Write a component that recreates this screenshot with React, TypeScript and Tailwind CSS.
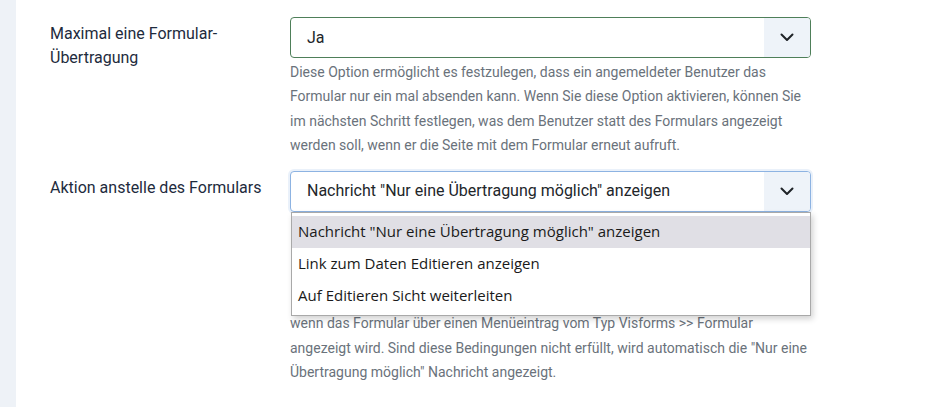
import React from "react";

function Chevron() {
  return (
    <svg width="14" height="9" viewBox="0 0 14 9" fill="none">
      <path d="M1.5 1.5 L7 7 L12.5 1.5" stroke="#1f2328" strokeWidth="2" strokeLinecap="round" strokeLinejoin="round" />
    </svg>
  );
}

function SelectBox({ value, focused }: { value: string; focused?: boolean }) {
  return (
    <div
      className={
        focused
          ? "flex h-[41px] w-[521px] items-stretch rounded-[4px] border border-[#8db3e2] bg-white shadow-[0_0_0_2px_rgba(141,179,226,0.18)]"
          : "flex h-[41px] w-[521px] items-stretch rounded-[4px] border border-[#4e7f59] bg-white"
      }
    >
      <div className="flex flex-1 items-center pl-[16px] text-[16px] text-[#22262a]">{value}</div>
      <div className="flex w-[46px] items-center justify-center rounded-r-[3px] bg-[#eef3f9]">
        <Chevron />
      </div>
    </div>
  );
}

export default function App() {
  return (
    <div className="flex h-[407px] w-[928px] bg-white" style={{ fontFamily: "Roboto, 'Liberation Sans', sans-serif" }}>
      <div className="w-[16px] shrink-0 bg-[#eef2f7]" />
      <div className="flex flex-col pl-[34px] pt-[17px]">
        {/* Row 1 */}
        <div className="flex">
          <div className="w-[240px] pt-[5px] text-[16px] leading-[24px] text-[#1e2b3d]">
            Maximal eine Formular-
            <br />
            Übertragung
          </div>
          <div className="flex flex-col">
            <SelectBox value="Ja" />
            <div className="mt-[2px] text-[14px] leading-[24.4px] text-[#6a727b]">
              Diese Option ermöglicht es festzulegen, dass ein angemeldeter Benutzer das
              <br />
              Formular nur ein mal absenden kann. Wenn Sie diese Option aktivieren, können Sie
              <br />
              im nächsten Schritt festlegen, was dem Benutzer statt des Formulars angezeigt
              <br />
              werden soll, wenn er die Seite mit dem Formular erneut aufruft.
            </div>
          </div>
        </div>
        {/* Row 2 */}
        <div className="mt-[13px] flex">
          <div className="w-[240px] pt-[5px] text-[16px] leading-[24px] text-[#1e2b3d]">
            Aktion anstelle des Formulars
          </div>
          <div className="relative flex flex-col">
            <SelectBox value={'Nachricht "Nur eine Übertragung möglich" anzeigen'} focused />
            <div className="mt-[2px] text-[14px] leading-[24.4px] text-[#6a727b]">
              <div className="h-[97.6px]" />
              wenn das Formular über einen Menüeintrag vom Typ Visforms &gt;&gt; Formular
              <br />
              angezeigt wird. Sind diese Bedingungen nicht erfüllt, wird automatisch die "Nur eine
              <br />
              Übertragung möglich" Nachricht angezeigt.
            </div>
            {/* Open dropdown list */}
            <div
              className="absolute left-[1px] top-[41px] w-[520px] border border-[#a9a9a9] bg-white py-[3px] shadow-[2px_3px_6px_rgba(0,0,0,0.18)]"
              style={{ fontFamily: "'Open Sans', 'Noto Sans', sans-serif" }}
            >
              <div className="flex h-[32px] items-center bg-[#e0dfe5] pl-[6px] text-[15px] text-[#1a1a1a]">
                Nachricht "Nur eine Übertragung möglich" anzeigen
              </div>
              <div className="flex h-[32px] items-center pl-[6px] text-[15px] text-[#1a1a1a]">
                Link zum Daten Editieren anzeigen
              </div>
              <div className="flex h-[32px] items-center pl-[6px] text-[15px] text-[#1a1a1a]">
                Auf Editieren Sicht weiterleiten
              </div>
            </div>
          </div>
        </div>
      </div>
    </div>
  );
}
